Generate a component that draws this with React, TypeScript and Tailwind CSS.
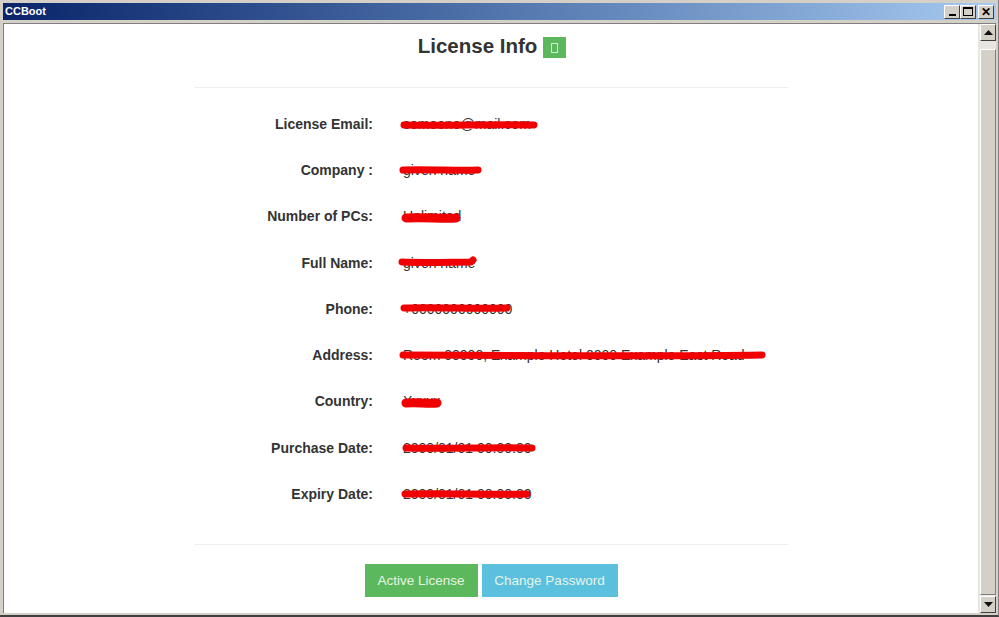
import React from 'react';

type Row = {
  label: string;
  value: string;
  // scribble, x from the start of the value, y from the middle of the row
  mark: string;
  thick?: number;
};

const rows: Row[] = [
  { label: 'License Email:', value: 'someone@mail.com', mark: 'M1 1 C40 2 90 0 131 1' },
  { label: 'Company :', value: 'given name', mark: 'M0 -1 C25 -2 55 0 75 -1' },
  { label: 'Number of PCs:', value: 'Unlimited', mark: 'M3 1 C20 0 40 2 53 1', thick: 9 },
  { label: 'Full Name:', value: 'given name', mark: 'M-1 -1 C20 0 50 -1 68 -1 L70 -3' },
  { label: 'Phone:', value: '+0000000000000', mark: 'M1 -1 C35 -2 70 0 104 -1' },
  { label: 'Address:', value: 'Room 00000, Example Hotel 0000 Example East Road', mark: 'M0 -1 C100 -1 250 1 359 -1' },
  { label: 'Country:', value: 'Xxxxx', mark: 'M3 1 C14 0 24 2 34 1', thick: 9 },
  { label: 'Purchase Date:', value: '2000/01/01 00:00:00', mark: 'M3 0 C45 1 90 -1 129 0' },
  { label: 'Expiry Date:', value: '2000/01/01 00:00:00', mark: 'M2 0 C40 -1 85 1 124 0' },
];

function WinButton({ children }: { children: React.ReactNode }) {
  return (
    <div className="flex h-[14px] w-[16px] items-center justify-center border border-t-white border-l-white border-r-[#404040] border-b-[#404040] bg-[#d4d0c8]">
      {children}
    </div>
  );
}

function ScrollButton({ up }: { up?: boolean }) {
  return (
    <div className="flex h-[17px] w-full shrink-0 items-center justify-center border border-t-white border-l-white border-r-[#404040] border-b-[#404040] bg-[#d4d0c8]">
      <svg width="9" height="5" viewBox="0 0 9 5">
        <path d={up ? 'M4.5 0 L9 5 L0 5 Z' : 'M0 0 L9 0 L4.5 5 Z'} fill="#111" />
      </svg>
    </div>
  );
}

export default function App() {
  return (
    <div className="flex h-[617px] w-[999px] flex-col overflow-hidden border-r border-b-2 border-r-[#808080] border-b-[#404040] bg-[#d4d0c8] pt-[3px] pr-[2px] pb-[2px] pl-[3px] font-['Liberation_Sans',Arial,sans-serif] text-[#333333]">
      {/* title bar */}
      <div className="flex h-[17px] shrink-0 items-center justify-between bg-gradient-to-r from-[#0a246a] to-[#a6caf0] pr-[2px] pl-[2px]">
        <span className="text-[11px] font-bold text-white">CCBoot</span>
        <div className="flex">
          <WinButton>
            <div className="mt-[7px] h-[2px] w-[7px] bg-black" />
          </WinButton>
          <WinButton>
            <div className="h-[9px] w-[10px] border border-t-2 border-black" />
          </WinButton>
          <div className="ml-[2px]">
            <WinButton>
              <span className="text-[12px] leading-none font-bold text-black">✕</span>
            </WinButton>
          </div>
        </div>
      </div>

      <div className="mt-[3px] flex min-h-0 flex-1 border-t border-l border-[#808080] bg-white">
        {/* page */}
        <div className="flex min-w-0 flex-1 flex-col items-center">
          <div className="mt-[9px] flex h-[27px] items-center gap-[6px] pl-[2px]">
            <h1 className="text-[20.5px] leading-none font-bold">License Info</h1>
            <div className="mt-[2px] flex h-[21px] w-[23px] items-center justify-center bg-[#5cb85c]">
              <div className="h-[10px] w-[7px] border border-[#d6eed6]" />
            </div>
          </div>

          <div className="mt-[27px] w-[594px] border-t border-[#eeeeee]" />

          <div className="mt-[13.25px] w-[594px]">
            {rows.map((row) => (
              <div key={row.label} className="flex h-[46.25px] items-center text-[14px]">
                <div className="w-[179px] text-right font-bold">{row.label}</div>
                <div className="relative ml-[30px] flex-1 whitespace-nowrap">
                  {row.value}
                  <svg className="absolute top-1/2 left-0 overflow-visible" width="1" height="1">
                    <path
                      d={row.mark}
                      fill="none"
                      stroke="#f00000"
                      strokeWidth={row.thick ?? 7}
                      strokeLinecap="round"
                      strokeLinejoin="round"
                    />
                  </svg>
                </div>
              </div>
            ))}
          </div>

          <div className="mt-[26.75px] w-[594px] border-t border-[#eeeeee]" />

          <div className="mt-[19px] flex gap-[4px] text-[13.5px] text-[#e6f4e6]">
            <button className="h-[33px] w-[113px] bg-[#5cb85c]">Active License</button>
            <button className="h-[33px] w-[136px] bg-[#5bc0de]">Change Password</button>
          </div>
        </div>

        {/* scrollbar */}
        <div className="flex w-[18px] shrink-0 flex-col bg-[#e8e6e0] pl-[2px]">
          <ScrollButton up />
          <div className="mt-[8px] mb-[1px] flex-1 border border-t-white border-l-white border-r-[#808080] border-b-[#808080] bg-[#d4d0c8]" />
          <ScrollButton />
        </div>
      </div>
    </div>
  );
}
